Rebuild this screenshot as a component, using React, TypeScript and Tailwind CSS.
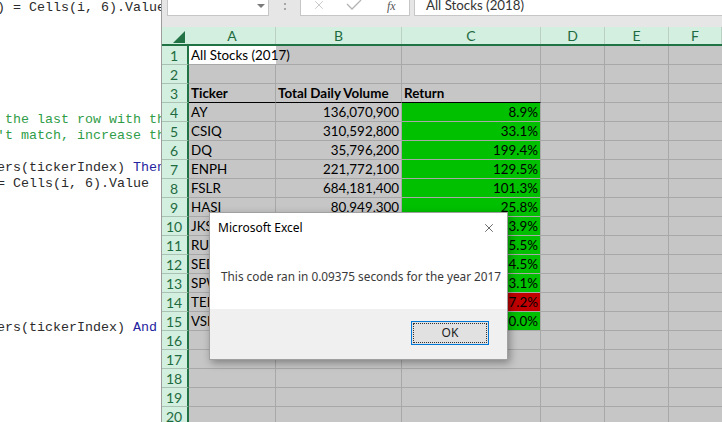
import { X } from "lucide-react"

type Line = { parts: { t: string; c?: "kw" | "cm" }[] }

const codeLines: Line[] = [
  { parts: [{ t: ") = Cells(i, 6).Value" }] },
  { parts: [] },
  { parts: [] },
  { parts: [] },
  { parts: [] },
  { parts: [] },
  { parts: [] },
  { parts: [{ t: " the last row with the", c: "cm" }] },
  { parts: [{ t: "'t match, increase the", c: "cm" }] },
  { parts: [] },
  { parts: [{ t: "ers(tickerIndex) " }, { t: "Then", c: "kw" }] },
  { parts: [{ t: "= Cells(i, 6).Value" }] },
  ...Array.from({ length: 8 }, () => ({ parts: [] })),
  { parts: [{ t: "ers(tickerIndex) " }, { t: "And", c: "kw" }] },
]

type Row = { a?: string; b?: string; c?: string; fill?: "g" | "r"; bold?: boolean }

const rows: Row[] = [
  { a: "All Stocks (2017)" },
  {},
  { a: "Ticker", b: "Total Daily Volume", c: "Return", bold: true },
  { a: "AY", b: "136,070,900", c: "8.9%", fill: "g" },
  { a: "CSIQ", b: "310,592,800", c: "33.1%", fill: "g" },
  { a: "DQ", b: "35,796,200", c: "199.4%", fill: "g" },
  { a: "ENPH", b: "221,772,100", c: "129.5%", fill: "g" },
  { a: "FSLR", b: "684,181,400", c: "101.3%", fill: "g" },
  { a: "HASI", b: "80,949,300", c: "25.8%", fill: "g" },
  { a: "JKS", b: "158,792,100", c: "53.9%", fill: "g" },
  { a: "RUN", b: "267,681,300", c: "5.5%", fill: "g" },
  { a: "SEDG", b: "206,500,100", c: "184.5%", fill: "g" },
  { a: "SPWR", b: "782,187,000", c: "23.1%", fill: "g" },
  { a: "TERP", b: "139,402,800", c: "-7.2%", fill: "r" },
  { a: "VSLR", b: "136,323,300", c: "50.0%", fill: "g" },
  {}, {}, {}, {}, {},
]

const cols = ["A", "B", "C", "D", "E", "F"]
const colW = ["w-[87px]", "w-[126px]", "w-[139px]", "w-[64px]", "w-[64px]", "flex-1"]

const CodePane = () => (
  <div className="w-[161px] h-full overflow-hidden bg-white font-['Liberation_Mono',monospace] text-[13.33px] leading-[16px] text-[#2b2b2b]">
    <div className="-ml-[3px]">
      {codeLines.map((l, i) => (
        <div key={i} className="h-[16px] whitespace-pre">
          {l.parts.map((p, j) => (
            <span key={j} className={p.c === "kw" ? "text-[#2323a0]" : p.c === "cm" ? "text-[#2f9d48]" : ""}>{p.t}</span>
          ))}
        </div>
      ))}
    </div>
  </div>
)

const FormulaBar = () => (
  <div className="h-[27px] bg-[#e6e6e6] flex items-start font-['Lato',sans-serif]">
    <div className="ml-[5px] w-[102px] h-[16px] bg-white border-b border-r border-l border-[#c6c6c6] relative">
      <div className="absolute left-[89px] top-[4px] w-0 h-0 border-l-[4px] border-r-[4px] border-t-[4px] border-l-transparent border-r-transparent border-t-[#7a7a7a]" />
    </div>
    <div className="w-[31px] h-[16px] flex flex-col items-center justify-start gap-[3px] pt-[3px]">
      <div className="w-[2px] h-[2px] bg-[#a6a6a6]" />
      <div className="w-[2px] h-[2px] bg-[#a6a6a6]" />
    </div>
    <div className="w-[110px] h-[16px] bg-white border-b border-l border-r border-[#c6c6c6] flex items-center">
      <X size={14} strokeWidth={1.2} className="ml-[11px] -mt-[6px] text-[#b3b3b3]" />
      <svg width="16" height="12" viewBox="0 0 16 12" className="ml-[20px] -mt-[6px]">
        <path d="M1 5 L6 10 L15 1" fill="none" stroke="#b3b3b3" strokeWidth="1.3" />
      </svg>
      <span className="ml-[25px] -mt-[4px] font-['Liberation_Serif',serif] italic text-[12px] text-[#555]">fx</span>
    </div>
    <div className="ml-[4px] flex-1 h-[16px] bg-white border-b border-l border-[#c6c6c6] pl-[11px] text-[13.3px] leading-[11px] text-[#333] overflow-hidden">
      All Stocks (2018)
    </div>
  </div>
)

const Sheet = () => (
  <div className="flex-1 h-full border-l border-[#9c9c9c] overflow-hidden font-['Lato',sans-serif] text-[13.4px]">
    <FormulaBar />
    <div className="flex h-[19px] bg-[#d3efe0] border-b-2 border-[#217346]">
      <div className="w-[27px] relative">
        <div className="absolute left-[11px] top-[4px] w-0 h-0 border-b-[12px] border-l-[12px] border-b-[#217346] border-l-transparent" />
      </div>
      {cols.map((c, i) => (
        <div key={c} className={`${colW[i]} shrink-0 border-r border-[#bccfc4] text-center text-[#1e6b41] text-[14px] leading-[18px]`}>{c}</div>
      ))}
    </div>
    {rows.map((r, i) => {
      const n = i + 1
      const line = n === 3 ? "border-b border-black" : "border-b border-[#a8a8a8]"
      const align = r.bold ? "font-bold text-left pl-[2px]" : "text-right pr-[2px]"
      return (
        <div key={n} className="flex h-[19px] leading-[19px]">
          <div className="w-[27px] shrink-0 bg-[#d3efe0] border-b border-[#aac2b4] border-r-2 border-r-[#217346] text-center text-[#1e6b41] text-[14px] pr-[1px]">{n}</div>
          <div className={`w-[87px] shrink-0 ${line} ${n === 1 ? "bg-white" : "bg-[#c6c6c6] border-r border-r-[#a8a8a8]"} pl-[2px] whitespace-nowrap relative z-10 ${r.bold ? "font-bold" : ""}`}>{r.a}</div>
          <div className={`w-[126px] shrink-0 bg-[#c6c6c6] ${line} border-r border-r-[#a8a8a8] whitespace-nowrap ${align}`}>{r.b}</div>
          <div className={`w-[139px] shrink-0 ${r.fill === "g" ? "bg-[#00c000]" : r.fill === "r" ? "bg-[#c00000]" : "bg-[#c6c6c6]"} ${line} border-r border-r-[#a8a8a8] whitespace-nowrap ${align}`}>{r.c}</div>
          <div className="w-[64px] shrink-0 bg-[#c6c6c6] border-b border-r border-[#a8a8a8]" />
          <div className="w-[64px] shrink-0 bg-[#c6c6c6] border-b border-r border-[#a8a8a8]" />
          <div className="flex-1 bg-[#c6c6c6] border-b border-[#a8a8a8]" />
        </div>
      )
    })}
  </div>
)

const MsgBox = () => (
  <div className="absolute z-30 left-[209px] top-[212px] w-[299px] h-[148px] bg-white border border-[#a0a0a0] shadow-[2px_3px_8px_rgba(0,0,0,0.35)] flex flex-col font-['Noto_Sans',sans-serif]">
    <div className="h-[30px] flex items-center justify-between pl-[8px] pr-[11px]">
      <span className="text-[12px] text-black">Microsoft Excel</span>
      <X size={14} strokeWidth={1} className="text-black" />
    </div>
    <div className="flex-1 pl-[11px] pt-[25px] text-[11.8px] text-[#3a3a3a]">This code ran in 0.09375 seconds for the year 2017</div>
    <div className="h-[50px] bg-[#f0f0f0] flex justify-end items-start pt-[12px] pr-[18px]">
      <button className="w-[78px] h-[24px] bg-[#e1e1e1] border border-[#0078d7] p-[1px]">
        <div className="w-full h-full border border-dotted border-[#333] flex items-center justify-center text-[12px] text-[#222]">OK</div>
      </button>
    </div>
  </div>
)

export default function App() {
  return (
    <div className="w-[722px] h-[422px] relative overflow-hidden flex bg-white">
      <CodePane />
      <Sheet />
      <MsgBox />
    </div>
  )
}
